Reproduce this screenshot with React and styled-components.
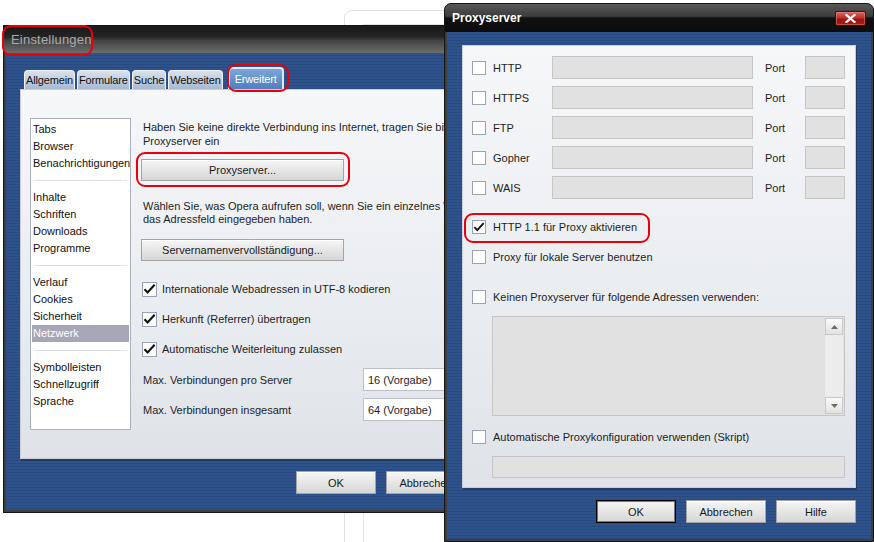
import React from 'react';
import styled, { createGlobalStyle, css } from 'styled-components';

const GlobalStyle = createGlobalStyle`
  html, body {
    margin: 0;
    padding: 0;
    background: #fff;
  }
  body {
    font-family: "Liberation Sans", Arial, sans-serif;
    font-size: 11px;
    color: #1e1e1e;
  }
`;

const stripes = css`
  background: repeating-linear-gradient(
    to bottom,
    #2e538c 0px,
    #2e538c 2px,
    #284a7f 2px,
    #284a7f 3px
  );
`;

const Desktop = styled.div`
  position: relative;
  width: 874px;
  height: 542px;
  overflow: hidden;
  background: #fff;
`;

const BackWindow = styled.div`
  position: absolute;
  left: 344px;
  top: 10px;
  width: 400px;
  height: 600px;
  box-sizing: border-box;
  border: 1px solid #e0e0e0;
  border-radius: 8px 8px 0 0;
  padding: 13px 0 0 18px;
`;

const BackInner = styled.div`
  height: 100%;
  border-left: 1px solid #e4e4e4;
  border-top: 1px solid #e4e4e4;
`;

const Window = styled.div`
  position: absolute;
  left: ${p => p.$x}px;
  top: ${p => p.$y}px;
  width: ${p => p.$w}px;
  height: ${p => p.$h}px;
  box-sizing: border-box;
  display: flex;
  flex-direction: column;
  border: 1px solid #141414;
  border-radius: ${p => (p.$round ? '7px 7px 0 0' : '0')};
  overflow: hidden;
  background: #1c1c1c;
`;

const TitleBar = styled.div`
  flex: none;
  height: ${p => p.$h}px;
  display: flex;
  align-items: center;
  justify-content: space-between;
  padding: 0 7px;
  background: ${p =>
    p.$glass
      ? 'linear-gradient(to bottom, #585858 0%, #3c3c3c 44%, #101010 50%, #0c0c0c 100%)'
      : 'linear-gradient(to bottom, #1a1a1a 0%, #222 38%, #444 55%, #6c6c6c 100%)'};
`;

const Title = styled.span`
  font-size: ${p => (p.$bold ? 12 : 13)}px;
  font-weight: ${p => (p.$bold ? 700 : 400)};
  color: ${p => (p.$bold ? '#fff' : '#a9a9a9')};
  letter-spacing: ${p => (p.$bold ? 0 : 0.2)}px;
`;

const CloseButton = styled.div`
  width: 31px;
  height: 15px;
  box-sizing: border-box;
  border: 1px solid #4a0a0a;
  border-radius: 2px;
  background: linear-gradient(to bottom, #d9645e 0%, #c0322c 45%, #9c1410 55%, #a81c16 100%);
  box-shadow: inset 0 0 0 1px rgba(255, 180, 170, 0.35);
  display: flex;
  align-items: center;
  justify-content: center;
`;

const Body = styled.div`
  flex: 1;
  display: flex;
  flex-direction: column;
  ${stripes};
  border: 2px solid #3e3e3e;
  border-top: none;
  padding: ${p => p.$pad};
`;

const TabRow = styled.div`
  display: flex;
  align-items: flex-end;
  gap: 2px;
  height: 22px;
  padding-left: 4px;
`;

const Tab = styled.div`
  height: ${p => (p.$active ? 22 : 19)}px;
  box-sizing: border-box;
  padding: 0 ${p => (p.$active ? 5 : 1)}px;
  display: flex;
  align-items: center;
  border: ${p => (p.$active ? 2 : 1)}px solid ${p => (p.$active ? '#dfe9f6' : '#eef2f8')};
  border-bottom: none;
  border-radius: 4px 4px 0 0;
  background: ${p =>
    p.$active
      ? 'linear-gradient(to bottom, #7aa6da, #4e7fbd)'
      : 'linear-gradient(to bottom, #d9e2ee, #a6b8d0)'};
  color: ${p => (p.$active ? '#fff' : '#111')};
  letter-spacing: -0.15px;
  margin-left: ${p => p.$ml || 0}px;
`;

const Panel = styled.div`
  width: ${p => p.$w}px;
  height: ${p => p.$h}px;
  box-sizing: border-box;
  background: linear-gradient(to bottom, #f6f7f9 0%, #e9ecf0 60%, #dfe3e9 100%);
  border: 1px solid #c9ced6;
  box-shadow: 1px 2px 0 rgba(0, 0, 0, 0.25);
  padding: ${p => p.$pad};
`;

const SettingsPanel = styled(Panel)`
  display: flex;
  align-items: flex-start;
  gap: 12px;
`;

const SideList = styled.div`
  width: 101px;
  height: 312px;
  box-sizing: border-box;
  flex: none;
  background: #fff;
  border: 1px solid #a9b1bd;
  padding: 2px 1px;
`;

const SideItem = styled.div`
  height: 17px;
  line-height: 17px;
  padding-left: 1px;
  white-space: nowrap;
  background: ${p => (p.$selected ? '#a7a6b7' : 'transparent')};
  color: ${p => (p.$selected ? '#fff' : '#111')};
`;

const SideSeparator = styled.div`
  height: 1px;
  margin: 8px 2px;
  background: #dcdfe4;
`;

const Content = styled.div`
  display: flex;
  flex-direction: column;
  align-items: flex-start;
`;

const Para = styled.p`
  margin: ${p => p.$mt}px 0 0 0;
  line-height: ${p => p.$lh}px;
  white-space: nowrap;
`;

const PushButton = styled.div`
  width: ${p => p.$w}px;
  height: ${p => p.$h || 22}px;
  box-sizing: border-box;
  margin: ${p => p.$mt || 0}px 0 0 ${p => p.$ml || 0}px;
  display: flex;
  align-items: center;
  justify-content: center;
  background: linear-gradient(to bottom, #f6f6f6 0%, #e6e6e6 50%, #d6d6d6 100%);
  border: 1px solid ${p => (p.$focus ? '#000' : '#a4a4a4')};
  box-shadow: ${p => (p.$focus ? 'inset 0 0 0 1px #777' : 'inset 0 1px 0 #fff')};
  color: #1a1a1a;
  white-space: nowrap;
`;

const CheckRow = styled.div`
  display: flex;
  align-items: center;
  gap: ${p => p.$gap || 7}px;
  height: 16px;
  margin: ${p => p.$mt || 0}px 0 0 ${p => p.$ml || 0}px;
  white-space: nowrap;
`;

const Box = styled.div`
  width: ${p => p.$size}px;
  height: ${p => p.$size}px;
  box-sizing: border-box;
  flex: none;
  background: #fff;
  border: 1px solid #9aa3b1;
  display: flex;
  align-items: center;
  justify-content: center;
`;

const SelectRow = styled.div`
  display: flex;
  align-items: center;
  height: 23px;
  margin-top: ${p => p.$mt}px;
`;

const SelectLabel = styled.span`
  width: 220px;
  white-space: nowrap;
`;

const SelectBox = styled.div`
  width: 120px;
  height: 23px;
  box-sizing: border-box;
  background: #fff;
  border: 1px solid #bcc1c9;
  padding-left: 4px;
  display: flex;
  align-items: center;
`;

const Footer = styled.div`
  display: flex;
  justify-content: flex-end;
  gap: 10px;
  margin-top: 12px;
  width: ${p => p.$w}px;
`;

const ProtocolGrid = styled.div`
  display: grid;
  grid-template-columns: 21px 59px 213px 40px 40px;
  grid-auto-rows: 23px;
  row-gap: 7px;
  align-items: center;
`;

const Field = styled.div`
  width: ${p => p.$w}px;
  height: ${p => p.$h || 23}px;
  box-sizing: border-box;
  margin: ${p => p.$mt || 0}px 0 0 ${p => p.$ml || 0}px;
  background: #e1e1e1;
  border: 1px solid #c6c6c6;
`;

const ListField = styled(Field)`
  display: flex;
  justify-content: flex-end;
  padding: 1px;
`;

const ScrollBar = styled.div`
  width: 18px;
  display: flex;
  flex-direction: column;
  background-color: #ececec;
  background-image: radial-gradient(#d4d4d4 0.6px, transparent 0.7px);
  background-size: 2px 2px;
`;

const ScrollArrow = styled.div`
  height: 17px;
  box-sizing: border-box;
  background: linear-gradient(to bottom, #fafafa, #e2e2e2);
  border: 1px solid #c9c9c9;
  display: flex;
  align-items: center;
  justify-content: center;
`;

const ScrollTrack = styled.div`
  flex: 1;
`;

const Ring = styled.div`
  position: absolute;
  left: ${p => p.$x}px;
  top: ${p => p.$y}px;
  width: ${p => p.$w}px;
  height: ${p => p.$h}px;
  box-sizing: border-box;
  border: 2px solid #e8000b;
  border-radius: 9px;
  pointer-events: none;
`;

const Check = () => (
  <svg width="13" height="12" viewBox="0 0 13 12">
    <path d="M1.5 6.2 L4.6 9.4 L11.6 1.8" fill="none" stroke="#111" strokeWidth="2.1" />
  </svg>
);

const CloseX = () => (
  <svg width="11" height="9" viewBox="0 0 11 9">
    <path d="M1.5 1 L9.5 8 M9.5 1 L1.5 8" stroke="#fff" strokeWidth="2.2" strokeLinecap="square" />
  </svg>
);

const Arrow = ({ up }) => (
  <svg width="7" height="4" viewBox="0 0 7 4">
    <path d={up ? 'M0 4 L3.5 0 L7 4 Z' : 'M0 0 L3.5 4 L7 0 Z'} fill="#6b6b6b" />
  </svg>
);

const sideGroups = [
  ['Tabs', 'Browser', 'Benachrichtigungen'],
  ['Inhalte', 'Schriften', 'Downloads', 'Programme'],
  ['Verlauf', 'Cookies', 'Sicherheit', 'Netzwerk'],
  ['Symbolleisten', 'Schnellzugriff', 'Sprache'],
];

const tabs = ['Allgemein', 'Formulare', 'Suche', 'Webseiten', 'Erweitert'];

const protocols = ['HTTP', 'HTTPS', 'FTP', 'Gopher', 'WAIS'];

const SettingsWindow = () => (
  <Window $x={3} $y={25} $w={570} $h={488}>
    <TitleBar $h={27}>
      <Title>Einstellungen</Title>
    </TitleBar>
    <Body $pad="14px 14px 0 14px">
      <TabRow>
        {tabs.map(t => (
          <Tab key={t} $active={t === 'Erweitert'} $ml={t === 'Erweitert' ? 3 : 0}>
            {t}
          </Tab>
        ))}
      </TabRow>
      <SettingsPanel $w={536} $h={370} $pad="28px 10px 0 9px">
        <SideList>
          {sideGroups.map((group, gi) => (
            <React.Fragment key={gi}>
              {gi > 0 && <SideSeparator />}
              {group.map(item => (
                <SideItem key={item} $selected={item === 'Netzwerk'}>
                  {item}
                </SideItem>
              ))}
            </React.Fragment>
          ))}
        </SideList>
        <Content>
          <Para $mt={2} $lh={14}>
            Haben Sie keine direkte Verbindung ins Internet, tragen Sie bitte
            <br />
            Proxyserver ein
          </Para>
          <PushButton $w={203} $mt={11} $ml={-2}>Proxyserver...</PushButton>
          <Para $mt={19} $lh={13}>
            Wählen Sie, was Opera aufrufen soll, wenn Sie ein einzelnes Wort
            <br />
            das Adressfeld eingegeben haben.
          </Para>
          <PushButton $w={203} $mt={13} $ml={-2}>Servernamenvervollständigung...</PushButton>
          <CheckRow $mt={20} $ml={-1} $gap={5}>
            <Box $size={15}><Check /></Box>
            Internationale Webadressen in UTF-8 kodieren
          </CheckRow>
          <CheckRow $mt={14} $ml={-1} $gap={5}>
            <Box $size={15}><Check /></Box>
            Herkunft (Referrer) übertragen
          </CheckRow>
          <CheckRow $mt={14} $ml={-1} $gap={5}>
            <Box $size={15}><Check /></Box>
            Automatische Weiterleitung zulassen
          </CheckRow>
          <SelectRow $mt={11}>
            <SelectLabel>Max. Verbindungen pro Server</SelectLabel>
            <SelectBox>16 (Vorgabe)</SelectBox>
          </SelectRow>
          <SelectRow $mt={7}>
            <SelectLabel>Max. Verbindungen insgesamt</SelectLabel>
            <SelectBox>64 (Vorgabe)</SelectBox>
          </SelectRow>
        </Content>
      </SettingsPanel>
      <Footer $w={536}>
        <PushButton $w={80} $h={23}>OK</PushButton>
        <PushButton $w={80} $h={23}>Abbrechen</PushButton>
        <PushButton $w={80} $h={23}>Hilfe</PushButton>
      </Footer>
    </Body>
  </Window>
);

const ProxyWindow = () => (
  <Window $x={444} $y={3} $w={430} $h={539} $round>
    <TitleBar $h={28} $glass>
      <Title $bold>Proxyserver</Title>
      <CloseButton><CloseX /></CloseButton>
    </TitleBar>
    <Body $pad="13px 15px 0 15px">
      <Panel $w={394} $h={443} $pad="10px 10px 0 9px">
        <ProtocolGrid>
          {protocols.map(p => (
            <React.Fragment key={p}>
              <Box $size={14} />
              <span>{p}</span>
              <Field $w={201} />
              <span>Port</span>
              <Field $w={40} />
            </React.Fragment>
          ))}
        </ProtocolGrid>
        <CheckRow $mt={20}>
          <Box $size={14}><Check /></Box>
          HTTP 1.1 für Proxy aktivieren
        </CheckRow>
        <CheckRow $mt={14}>
          <Box $size={14} />
          Proxy für lokale Server benutzen
        </CheckRow>
        <CheckRow $mt={24}>
          <Box $size={14} />
          Keinen Proxyserver für folgende Adressen verwenden:
        </CheckRow>
        <ListField $w={353} $h={100} $mt={11} $ml={20}>
          <ScrollBar>
            <ScrollArrow><Arrow up /></ScrollArrow>
            <ScrollTrack />
            <ScrollArrow><Arrow /></ScrollArrow>
          </ScrollBar>
        </ListField>
        <CheckRow $mt={13}>
          <Box $size={14} />
          Automatische Proxykonfiguration verwenden (Skript)
        </CheckRow>
        <Field $w={353} $h={22} $mt={11} $ml={20} />
      </Panel>
      <Footer $w={394}>
        <PushButton $w={80} $h={23} $focus>OK</PushButton>
        <PushButton $w={80} $h={23}>Abbrechen</PushButton>
        <PushButton $w={80} $h={23}>Hilfe</PushButton>
      </Footer>
    </Body>
  </Window>
);

export default function App() {
  return (
    <Desktop>
      <GlobalStyle />
      <BackWindow>
        <BackInner />
      </BackWindow>
      <SettingsWindow />
      <ProxyWindow />
      <Ring $x={2} $y={25} $w={91} $h={31} />
      <Ring $x={227} $y={64} $w={62} $h={28} />
      <Ring $x={136} $y={152} $w={214} $h={35} />
      <Ring $x={464} $y={213} $w={186} $h={30} />
    </Desktop>
  );
}
